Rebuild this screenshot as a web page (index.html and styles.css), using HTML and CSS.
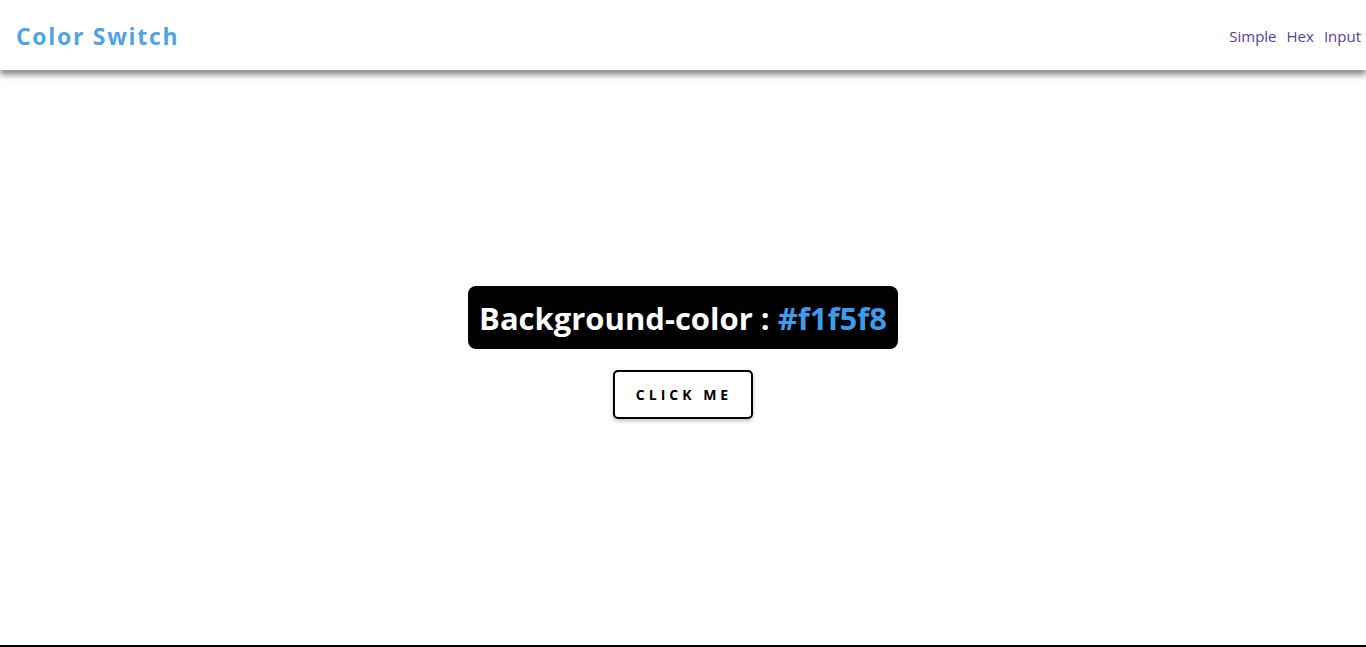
FILE: index.html
```html
<!DOCTYPE html>
<html lang="en">
<head>
<meta charset="utf-8">
<title>Color Switch</title>
<link rel="stylesheet" href="styles.css">
</head>
<body>
<nav class="navbar">
  <h1 class="brand">Color Switch</h1>
  <ul class="nav-links">
    <li><a href="#" class="nav-link">Simple</a></li>
    <li><a href="#" class="nav-link">Hex</a></li>
    <li><a href="#" class="nav-link">Input</a></li>
  </ul>
</nav>
<main class="main">
  <div class="container">
    <h2 class="label">Background-color : <span class="color">#f1f5f8</span></h2>
    <button class="btn">click me</button>
  </div>
</main>
</body>
</html>
```

FILE: styles.css
```css
* { box-sizing: border-box; }
html, body { margin: 0; padding: 0; }
body {
  font-family: "Open Sans", "Noto Sans", sans-serif;
  background: #fff;
  height: 647px;
  display: flex;
  flex-direction: column;
  overflow: hidden;
}
.navbar {
  height: 70px;
  flex: none;
  display: flex;
  align-items: center;
  justify-content: space-between;
  padding: 2px 5px 0 16px;
  background: #fff;
  box-shadow: 0 5px 6px rgba(0, 0, 0, 0.45);
  position: relative;
  z-index: 1;
}
.brand {
  margin: 0;
  font-size: 23px;
  font-weight: 700;
  letter-spacing: 1.7px;
  color: #4fa3e6;
}
.nav-links {
  list-style: none;
  margin: 0;
  padding: 0;
  display: flex;
  gap: 10px;
}
.nav-link {
  text-decoration: none;
  color: #5a3c9c;
  font-size: 15px;
}
.main {
  flex: 1;
  display: flex;
  align-items: center;
  justify-content: center;
  border-bottom: 2px solid #000;
}
.container {
  display: flex;
  flex-direction: column;
  align-items: center;
  gap: 21px;
  margin-top: -10px;
}
.label {
  margin: 0;
  background: #000;
  color: #fff;
  font-size: 31px;
  font-weight: 700;
  letter-spacing: 0;
  padding: 0 11px;
  height: 63px;
  display: flex;
  align-items: center;
  border-radius: 8px;
  white-space: pre;
}
.color { color: #3d9be9; }
.btn {
  width: 140px;
  height: 49px;
  background: #fff;
  border: 2px solid #000;
  border-radius: 5px;
  box-shadow: 0 2px 4px rgba(0, 0, 0, 0.25);
  font-family: inherit;
  font-weight: 700;
  font-size: 14px;
  letter-spacing: 4px;
  text-transform: uppercase;
  padding: 0 0 0 2px;
  color: #000;
  cursor: pointer;
}
```
